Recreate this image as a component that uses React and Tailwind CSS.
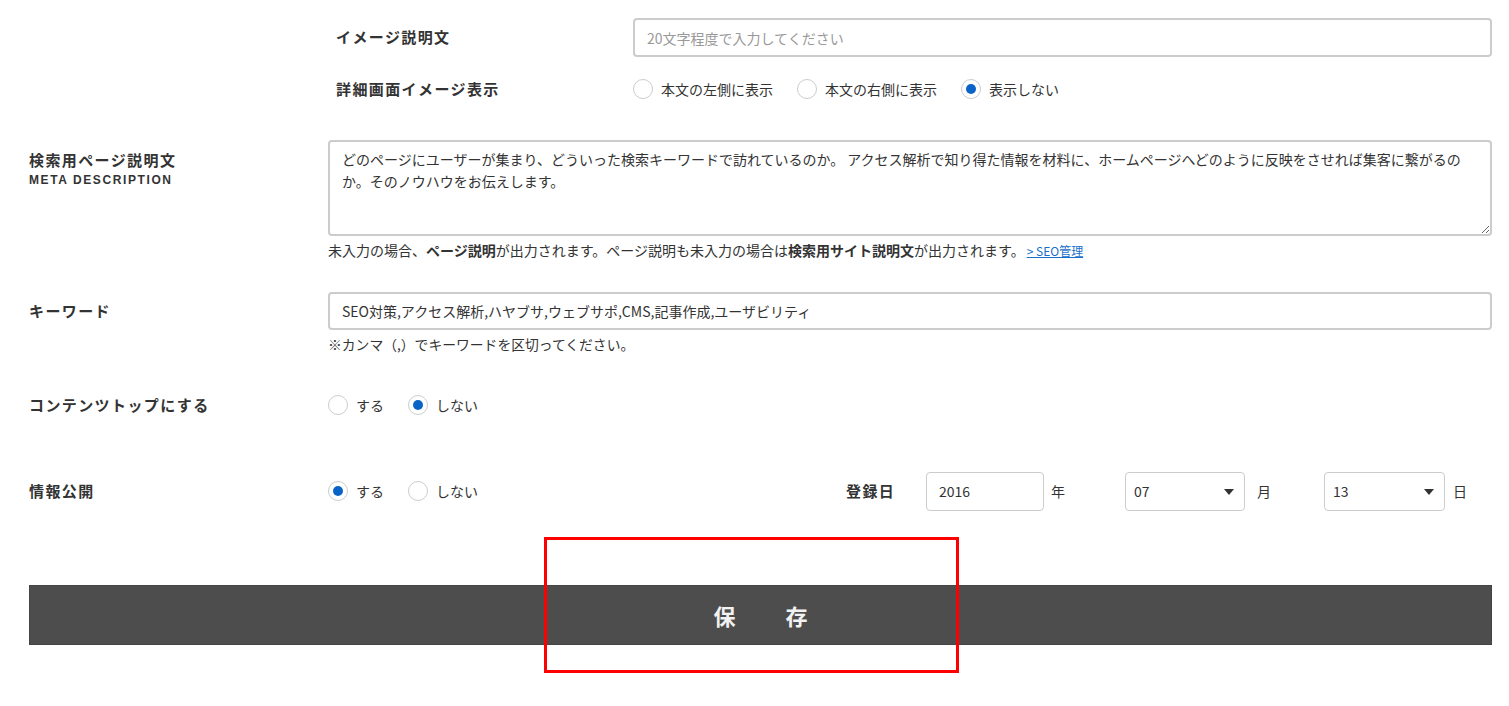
import React from 'react';

const FONT = "font-['Noto_Sans_CJK_JP','Noto_Sans',sans-serif]";

function Radio({ checked, label }) {
  return (
    <label className="flex items-center gap-[8px] cursor-pointer">
      <span className="relative w-[20px] h-[20px] rounded-full border border-[#cccccc] bg-white flex items-center justify-center">
        {checked && <span className="w-[10px] h-[10px] rounded-full bg-[#0a64c8]" />}
      </span>
      <span className="text-[14px] text-[#333333] leading-[20px]">{label}</span>
    </label>
  );
}

function Caret() {
  return (
    <svg width="10" height="6" viewBox="0 0 10 6" className="absolute right-[10px] top-[16px]">
      <path d="M0 0 L10 0 L5 6 Z" fill="#333333" />
    </svg>
  );
}

export default function App() {
  const label = "text-[15px] font-bold text-[#333333] tracking-[1.4px]";
  return (
    <div className={`relative w-full h-[706px] bg-white ${FONT} text-[#333333]`}>
      <div className="pl-[29px] pr-[17px]">
        {/* image sub-section */}
        <div className="ml-[299px] pt-[18px]">
          <div className="flex items-center h-[39px]">
            <div className={`w-[305px] pl-[8px] ${label}`}>イメージ説明文</div>
            <input
              className="flex-1 h-[39px] border-2 border-[#cccccc] rounded-[4px] px-[12px] text-[14px] placeholder:text-[#999999] outline-none"
              placeholder="20文字程度で入力してください"
            />
          </div>
          <div className="flex items-center h-[20px] mt-[22px]">
            <div className={`w-[305px] pl-[8px] ${label}`}>詳細画面イメージ表示</div>
            <div className="flex items-center gap-[24px]">
              <Radio label="本文の左側に表示" />
              <Radio label="本文の右側に表示" />
              <Radio checked label="表示しない" />
            </div>
          </div>
        </div>

        {/* meta description */}
        <div className="flex mt-[41px]">
          <div className="w-[299px] pt-[10px]">
            <div className={`${label} leading-[20px]`}>検索用ページ説明文</div>
            <div className="font-['Liberation_Sans',sans-serif] text-[12px] font-bold tracking-[1.6px] text-[#333333] leading-[18px] mt-[1px]">
              META DESCRIPTION
            </div>
          </div>
          <div className="flex-1">
            <textarea
              className="block w-full h-[96px] border-2 border-[#cccccc] rounded-[4px] px-[12px] pt-[6px] text-[14px] leading-[22px] text-[#333333] outline-none"
              defaultValue="どのページにユーザーが集まり、どういった検索キーワードで訪れているのか。 アクセス解析で知り得た情報を材料に、ホームページへどのように反映をさせれば集客に繋がるのか。そのノウハウをお伝えします。"
            />
            <p className="mt-[4px] text-[14px] leading-[20px] text-[#333333]">
              未入力の場合、<b>ページ説明</b>が出力されます。ページ説明も未入力の場合は<b>検索用サイト説明文</b>が出力されます。
              <a href="#" className="ml-[2px] text-[12px] text-[#1a6fc9] underline">&gt; SEO管理</a>
            </p>
          </div>
        </div>

        {/* keywords */}
        <div className="flex mt-[31px]">
          <div className={`w-[299px] h-[38px] flex items-center ${label}`}>キーワード</div>
          <div className="flex-1">
            <input
              className="block w-full h-[38px] border-2 border-[#cccccc] rounded-[4px] px-[12px] text-[14px] text-[#333333] outline-none"
              defaultValue="SEO対策,アクセス解析,ハヤブサ,ウェブサポ,CMS,記事作成,ユーザビリティ"
            />
            <p className="mt-[4px] text-[13.8px] leading-[20px] text-[#333333]">※カンマ（,）でキーワードを区切ってください。</p>
          </div>
        </div>

        {/* content top */}
        <div className="flex items-center h-[20px] mt-[41px]">
          <div className={`w-[299px] ${label}`}>コンテンツトップにする</div>
          <div className="flex items-center gap-[24px]">
            <Radio label="する" />
            <Radio checked label="しない" />
          </div>
        </div>

        {/* publish */}
        <div className="flex items-center h-[38px] mt-[57px]">
          <div className={`w-[299px] ${label}`}>情報公開</div>
          <div className="w-[518px] flex items-center gap-[24px]">
            <Radio checked label="する" />
            <Radio label="しない" />
          </div>
          <div className={`w-[80px] ${label}`}>登録日</div>
          <input
            className="w-[118px] h-[39px] border border-[#cccccc] rounded-[4px] px-[12px] text-[14px] text-[#333333] outline-none"
            defaultValue="2016"
          />
          <div className="w-[81px] pl-[7px] text-[14px] text-[#333333]">年</div>
          <div className="relative w-[120px] h-[39px] border border-[#cccccc] rounded-[4px] pl-[8px] flex items-center text-[14px] text-[#333333]">
            07
            <Caret />
          </div>
          <div className="w-[79px] pl-[12px] text-[14px] text-[#333333]">月</div>
          <div className="relative w-[121px] h-[39px] border border-[#cccccc] rounded-[4px] pl-[8px] flex items-center text-[14px] text-[#333333]">
            13
            <Caret />
          </div>
          <div className="pl-[8px] text-[14px] text-[#333333]">日</div>
        </div>

        {/* save */}
        <button className="mt-[75px] w-full h-[60px] bg-[#4d4d4d] border border-[#444444] flex items-center justify-center gap-[50px] text-[22px] font-bold text-[#f2f2f2]">
          <span>保</span>
          <span>存</span>
        </button>
      </div>

      {/* annotation frame */}
      <div className="absolute left-[544px] top-[537px] w-[415px] h-[136px] border-[3px] border-[#ff0000] pointer-events-none" />
    </div>
  );
}
